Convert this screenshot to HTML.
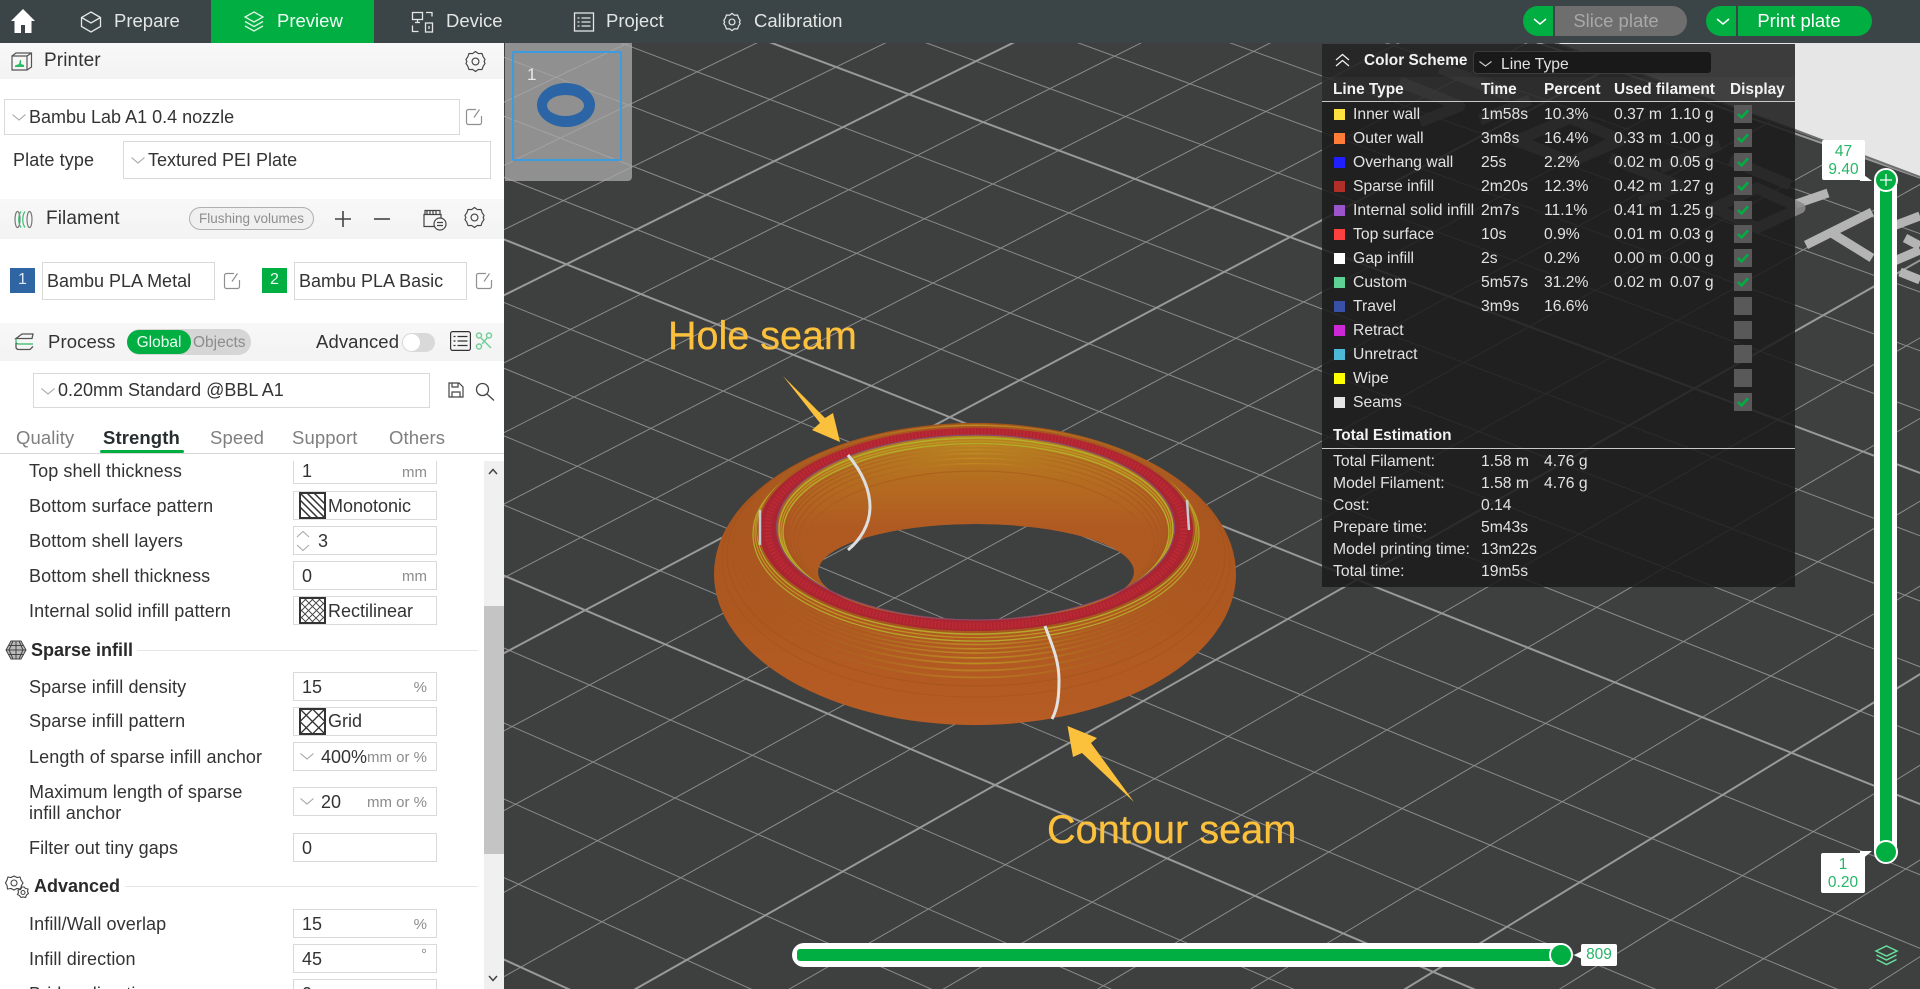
<!DOCTYPE html>
<html><head><meta charset="utf-8"><title>Preview</title>
<style>
html,body{margin:0;padding:0;width:1920px;height:989px;overflow:hidden;background:#3e3f3f;font-family:"Liberation Sans","Noto Sans CJK SC",sans-serif;color:#333}
.a{position:absolute}
.t{position:absolute;white-space:nowrap;line-height:26px;height:26px}
.l{font-size:18px;color:#333;letter-spacing:.1px}
.nav{font-size:18.5px;color:#e4e6e6;top:9px;line-height:24px;height:24px}
.f{position:absolute;box-sizing:border-box;background:#fff;border:1px solid #d9d9d9}
.u{position:absolute;font-size:15px;color:#8c8c8c;line-height:24px;white-space:nowrap;text-align:right;right:1493px}
.v{font-size:18px;color:#333}
.hd{position:absolute;left:0;width:504px;background:linear-gradient(#f8f8f8,#f3f3f3)}
svg.i{position:absolute;overflow:visible;fill:none}
.p{font-size:15.7px;color:#e2e2e2}
.b{font-size:15.4px;font-weight:bold;color:#f2f2f2}
.sq{position:absolute;left:1334px;width:11px;height:11px}
.cb{position:absolute;left:1734px;width:18px;height:18px;background:#595959}
.cb svg{position:absolute;left:3px;top:4px}
.tip{position:absolute;background:#fff;color:#26b566;font-size:15.5px;line-height:18px;text-align:center;border-radius:2px}
</style></head>
<body>
<svg width="0" height="0" style="position:absolute">
<defs>
<symbol id="chev" viewBox="0 0 14 7"><path d="M.5 .5 7 6 13.500 .5" fill="none" stroke="#a6a6a6" stroke-width="1.100"/></symbol>
<symbol id="edit" viewBox="0 0 18 18"><path d="M11 1.500H3.500a2 2 0 0 0-2 2v11a2 2 0 0 0 2 2h11a2 2 0 0 0 2-2V8" fill="none" stroke="#8f8f8f" stroke-width="1.200"/><path d="M9 9.500 14.500 1.500" fill="none" stroke="#8f8f8f" stroke-width="1.200"/></symbol>
<symbol id="gear" viewBox="0 0 22 24"><path d="M11 1.500 14 3.700 17.800 3.500 19 7 21 10 20 12 21 14 19 17 17.800 20.500 14 20.300 11 22.500 8 20.300 4.200 20.500 3 17 1 14 2 12 1 10 3 7 4.200 3.500 8 3.700Z" fill="none" stroke="#444" stroke-width="1.200" stroke-linejoin="round"/><circle cx="11" cy="12" r="3.600" fill="none" stroke="#444" stroke-width="1.200"/></symbol>
<clipPath id="outerC"><ellipse cx="975" cy="574" rx="261" ry="151"/></clipPath>
<clipPath id="innerC"><path clip-rule="evenodd" d="M776.500 527.500a199 92.500 0 1 0 398 0a199 92.500 0 1 0-398 0ZM818 572a158 48 0 1 0 316 0a158 48 0 1 0-316 0Z"/></clipPath>
<linearGradient id="bodyG" x1="0" y1="0" x2="0" y2="1"><stop offset="0" stop-color="#a9551f"/><stop offset=".6" stop-color="#ad5820"/><stop offset="1" stop-color="#b65c24"/></linearGradient>
<linearGradient id="innerG" x1="0" y1="0" x2="0" y2="1"><stop offset="0" stop-color="#b5851f"/><stop offset=".22" stop-color="#b56f20"/><stop offset=".5" stop-color="#b05a22"/><stop offset="1" stop-color="#b05a22"/></linearGradient>
<linearGradient id="ringG" gradientUnits="userSpaceOnUse" x1="714" y1="0" x2="1236" y2="0"><stop offset=".05" stop-color="#a9561f"/><stop offset=".28" stop-color="#ad6420"/><stop offset=".5" stop-color="#bd8c22"/><stop offset=".72" stop-color="#ad6420"/><stop offset=".95" stop-color="#a9561f"/></linearGradient>
<linearGradient id="ringI" gradientUnits="userSpaceOnUse" x1="776" y1="0" x2="1175" y2="0"><stop offset=".05" stop-color="#a9561f"/><stop offset=".3" stop-color="#b26c20"/><stop offset=".5" stop-color="#c08a22"/><stop offset=".7" stop-color="#b26c20"/><stop offset=".95" stop-color="#a9561f"/></linearGradient>
</defs>
</svg>

<!-- plate + grid + logo + torus -->
<svg class="a" style="left:0;top:0" width="1920" height="989" viewBox="0 0 1920 989">
  <rect width="1920" height="989" fill="#3e3f3f"/>
  <path fill="none" stroke="#8b8b8b" stroke-width="1" d="
  M1248 -310L-903 706M1318 -287L-832 741M1389 -263L-760 777M1461 -239L-687 813
  M1607 -191L-538 886M1681 -166L-462 924M1756 -141L-385 962M1831 -116L-306 1001
  M1986 -64L-147 1080M2064 -38L-65 1120M2143 -12L17 1161M2223 15L101 1202
  M2387 69L272 1287M2470 97L360 1330M2554 125L449 1374M2639 153L539 1418
  M2812 211L723 1509M2901 241L817 1556M2990 270L913 1603
  M722 -393L3539 568M661 -366L3483 608M599 -338L3427 648
  M473 -283L3313 731M408 -254L3255 774M343 -226L3195 817M278 -197L3135 860
  M144 -138L3012 950M76 -107L2949 996M7 -77L2885 1042M-63 -46L2820 1089
  M-205 16L2688 1185M-278 48L2620 1235M-351 81L2550 1285M-426 114L2480 1336
  M-577 181L2337 1440M-655 215L2263 1494M-733 249L2188 1548M-812 284L2112 1603
  M-974 356L1955 1717M-1057 392L1875 1775"/>
  <path fill="none" stroke="#999" stroke-width="2" d="
  M1533 -215L-613 849M1908 -90L-227 1040M2305 42L186 1244M2725 182L630 1463
  M536 -311L3371 690M211 -167L3074 905M-134 -15L2755 1137M-501 147L2409 1388M-893 320L2034 1660"/>

  <polygon points="1555,43 1920,43 1920,177 1795,130" fill="#e6e6e6"/>
  <path d="M1555 43 1795 130 1920 177" stroke="#6f6f6f" stroke-width="2" fill="none"/>
  <g fill="none" stroke="#b4b4b4" stroke-width="9" stroke-linejoin="round">
    <path d="M1796 204 1828 193"/>
    <path d="M1806 245 1872 212M1830 232 1872 258"/>
    <path d="M1888 228 1920 216M1892 262 1920 250M1905 238 1920 246M1900 272 1920 280"/>
  </g>
  <g fill="none" stroke="#8a8a8a" stroke-width="11" stroke-linejoin="round" opacity=".9">
    <path d="M1570 118 1622 140 1570 162 1518 140Z"/>
    <path d="M1757 188 1800 208 1757 228 1714 208Z"/>
    <path d="M1400 82 1460 106 1420 122M1440 68 1510 96M1610 158 1680 186 1640 202M1660 168 1720 145M1730 160 1790 185M1480 120 1530 100"/>
  </g>

  <path fill-rule="evenodd" fill="url(#bodyG)" d="M714 574a261 151 0 1 0 522 0a261 151 0 1 0-522 0ZM818 572a158 48 0 1 0 316 0a158 48 0 1 0-316 0Z"/>
  <g clip-path="url(#outerC)" fill="none">
    <ellipse cx="976" cy="530.500" rx="219" ry="103.600" stroke="#b3a82c" stroke-width="1.500"/>
    <ellipse cx="976" cy="532.200" rx="221" ry="105.400" stroke="#bd9422" stroke-width="1.300"/>
    <ellipse cx="976" cy="533.900" rx="223" ry="107.200" stroke="#b3a82c" stroke-width="1.300"/>
    <ellipse cx="976" cy="535.500" rx="225" ry="109" stroke="url(#ringG)" stroke-width="1.500"/>
    <ellipse cx="976" cy="537.500" rx="228" ry="111.300" stroke="url(#ringG)" stroke-width="1.600"/>
    <ellipse cx="976" cy="539.500" rx="230" ry="113.500" stroke="url(#ringG)" stroke-width="1.500"/>
    <ellipse cx="976" cy="541.900" rx="233" ry="116" stroke="url(#ringG)" stroke-width="1.700"/>
    <ellipse cx="976" cy="544.600" rx="236" ry="118.900" stroke="url(#ringG)" stroke-width="1.800"/>
    <ellipse cx="976" cy="547.900" rx="240" ry="122.600" stroke="url(#ringG)" stroke-width="1.800" opacity=".8"/>
    <ellipse cx="976" cy="551.300" rx="244" ry="126.200" stroke="url(#ringG)" stroke-width="1.800" opacity=".6"/>
    <ellipse cx="976" cy="555" rx="249" ry="131" stroke="#9a5018" stroke-width="1" opacity=".5"/>
    <ellipse cx="976" cy="560" rx="254" ry="137" stroke="#9a5018" stroke-width="1" opacity=".4"/>
  </g>
  <path fill-rule="evenodd" fill="#a92531" d="M758 529.500a218 102.500 0 1 0 436 0a218 102.500 0 1 0-436 0ZM776.500 527.500a199 92.500 0 1 0 398 0a199 92.500 0 1 0-398 0Z"/>
  <ellipse cx="976" cy="529.500" rx="218" ry="102.500" fill="none" stroke="#a8561f" stroke-width="2"/>
  <ellipse cx="975.500" cy="528.500" rx="208" ry="97.500" fill="none" stroke="#c42a34" stroke-width="7" stroke-dasharray="2 1.500" opacity=".7"/>
  <path fill-rule="evenodd" fill="url(#innerG)" d="M776.500 527.500a199 92.500 0 1 0 398 0a199 92.500 0 1 0-398 0ZM818 572a158 48 0 1 0 316 0a158 48 0 1 0-316 0Z"/>
  <g clip-path="url(#innerC)" fill="none">
    <ellipse cx="976" cy="529" rx="197" ry="91" stroke="#b3b02a" stroke-width="1.500"/>
    <ellipse cx="976" cy="530.500" rx="195" ry="89.500" stroke="#bd9622" stroke-width="1.300"/>
    <ellipse cx="976" cy="531.800" rx="193" ry="88.300" stroke="#b3ae2a" stroke-width="1.300"/>
    <ellipse cx="976" cy="533" rx="191" ry="87" stroke="url(#ringI)" stroke-width="1.400"/>
    <ellipse cx="976" cy="534.800" rx="189" ry="85.300" stroke="url(#ringI)" stroke-width="1.400"/>
    <ellipse cx="976" cy="536.800" rx="186" ry="83.300" stroke="url(#ringI)" stroke-width="1.500"/>
    <ellipse cx="976" cy="539" rx="182" ry="80.800" stroke="url(#ringI)" stroke-width="1.500"/>
    <ellipse cx="976" cy="541.800" rx="178" ry="78.300" stroke="url(#ringI)" stroke-width="1.500" opacity=".8"/>
    <ellipse cx="976" cy="545.500" rx="172" ry="74.500" stroke="#a85c1c" stroke-width="1.300" opacity=".7"/>
  </g>
  <ellipse cx="975.500" cy="527.500" rx="199" ry="92.500" fill="none" stroke="#8b4a66" stroke-width="1.300"/>
  <path d="M848 455C862 472 870 490 870 507C870 525 860 540 848 550" fill="none" stroke="#dedede" stroke-width="3"/>
  <path d="M1045 626C1052 645 1059 660 1059 680C1059 695 1058 708 1052 719" fill="none" stroke="#e2e2e2" stroke-width="3"/>
  <path d="M760 510 760 545M1187 500 1189 530" stroke="#c8c8d0" stroke-width="2.500" fill="none"/>

  <polygon points="783,376 825,418 833,413 840,442 812,430 820,423" fill="#fcc13c"/>
  <polygon points="1067.500,726 1097,738 1091,743 1134,802 1082,753 1073,757" fill="#fcc13c"/>
  <text x="668" y="349" font-family="Liberation Sans, sans-serif" font-size="39.500" fill="#fcc13c" stroke="#fcc13c" stroke-width=".3">Hole seam</text>
  <text x="1047" y="843" font-family="Liberation Sans, sans-serif" font-size="39.700" fill="#fcc13c" stroke="#fcc13c" stroke-width=".3">Contour seam</text>
</svg>

<!-- thumbnail -->
<div class="a" style="left:505px;top:43px;width:127px;height:138px;background:rgba(170,170,170,.76);border-radius:0 0 4px 0"></div>
<div class="a" style="left:512px;top:51px;width:110px;height:110px;box-sizing:border-box;border:2px solid #3d9be0;border-radius:2px"></div>
<span class="t" style="left:527px;top:62px;font-size:17px;color:#e8e8e8">1</span>
<svg class="a" style="left:505px;top:43px" width="127" height="138"><path fill-rule="evenodd" fill="#2b65a6" d="M32 62a29 22 0 1 0 58 0a29 22 0 1 0-58 0ZM42 62.500a18.500 10.500 0 1 0 37 0a18.500 10.500 0 1 0-37 0Z"/></svg>

<!-- top bar -->
<div class="a" style="left:0;top:0;width:1920px;height:43px;background:#3b4446"></div>
<div class="a" style="left:211px;top:0;width:163px;height:43px;background:#00ae42"></div>
<svg class="i" style="left:10px;top:8px" width="26" height="26" viewBox="0 0 26 26"><path d="M13 1 1 13h3.500v12h6.500v-8h4v8h6.500V13H25z" fill="#fff"/></svg>
<svg class="i" style="left:80px;top:10px" width="22" height="24" viewBox="0 0 22 24" stroke="#e4e6e6" stroke-width="1.300"><path d="M11 2 20.500 7.500v9L11 22 1.500 16.500v-9Z"/><path d="M1.500 7.500 11 13l9.500-5.500"/></svg>
<span class="t nav" style="left:114px">Prepare</span>
<svg class="i" style="left:243px;top:10px" width="22" height="24" viewBox="0 0 22 24" stroke="#dff5e6" stroke-width="1.300"><path d="M11 2 20 7 11 12 2 7Z"/><path d="M2 11.500 11 16.500 20 11.500M2 16 11 21 20 16"/></svg>
<span class="t nav" style="left:277px;color:#f0fff5">Preview</span>
<svg class="i" style="left:411px;top:10px" width="24" height="24" viewBox="0 0 24 24" stroke="#e4e6e6" stroke-width="1.300"><rect x="1.500" y="2.500" width="10" height="7"/><path d="M4 12.500h5M6.500 9.500v3M15 2.500h6v4M1.500 15.500v6h6"/><rect x="14.500" y="13" width="7" height="9"/><path d="M18 16v3"/></svg>
<span class="t nav" style="left:446px">Device</span>
<svg class="i" style="left:573px;top:11px" width="22" height="22" viewBox="0 0 22 22" stroke="#e4e6e6" stroke-width="1.300"><rect x="1.500" y="2" width="19" height="18"/><path d="M4.500 7h2M8.500 7h9M4.500 11h2M8.500 11h9M4.500 15h2M8.500 15h9"/></svg>
<span class="t nav" style="left:606px">Project</span>
<svg class="i" style="left:723px;top:12px" width="18" height="20" viewBox="0 0 22 24"><path d="M11 1.500 14 3.700 17.800 3.500 19 7 21 10 20 12 21 14 19 17 17.800 20.500 14 20.300 11 22.500 8 20.300 4.200 20.500 3 17 1 14 2 12 1 10 3 7 4.200 3.500 8 3.700Z" stroke="#e4e6e6" stroke-width="1.500"/><circle cx="11" cy="12" r="3.600" stroke="#e4e6e6" stroke-width="1.500"/></svg>
<span class="t nav" style="left:754px">Calibration</span>

<div class="a" style="left:1523px;top:6px;width:30px;height:30px;background:#00ae42;border-radius:15px 0 0 15px"></div>
<svg class="i" style="left:1533px;top:18px" width="14" height="7"><path d="M1 1 7 6 13 1" stroke="#fff" stroke-width="1.500"/></svg>
<div class="a" style="left:1555px;top:6px;width:132px;height:30px;background:#6e6e6e;border-radius:0 15px 15px 0"></div>
<span class="t" style="left:1550px;width:132px;top:8px;text-align:center;font-size:18.500px;color:#a8a8a8">Slice plate</span>
<div class="a" style="left:1706px;top:6px;width:30px;height:30px;background:#00ae42;border-radius:15px 0 0 15px"></div>
<svg class="i" style="left:1716px;top:18px" width="14" height="7"><path d="M1 1 7 6 13 1" stroke="#fff" stroke-width="1.500"/></svg>
<div class="a" style="left:1738px;top:6px;width:134px;height:30px;background:#00ae42;border-radius:0 15px 15px 0"></div>
<span class="t" style="left:1734px;width:130px;top:8px;text-align:center;font-size:18.500px;color:#fff">Print plate</span>

<!-- left panel -->
<div class="a" style="left:0;top:43px;width:504px;height:946px;background:#fff;overflow:hidden"></div>
<div class="hd" style="top:43px;height:36px"></div>
<svg class="i" style="left:11px;top:52px" width="22" height="19" viewBox="0 0 22 19"><path d="M1 4h15v14H1zM1 4l4-3h15.500v14l-4.500 3M16 4l4.500-3" stroke="#555" stroke-width="1.200"/><path d="M4 15h9v-2l-3-1v-4h-1l-1 4-4 1.500z" fill="#2dbb66"/></svg>
<span class="t l" style="left:44px;top:48px;font-size:19px">Printer</span>
<svg class="i" style="left:465px;top:50px" width="21" height="23"><use href="#gear"/></svg>

<div class="f" style="left:4px;top:99px;width:456px;height:36px"></div>
<svg class="i" style="left:12px;top:114px" width="14" height="7"><use href="#chev"/></svg>
<span class="t v" style="left:29px;top:104px">Bambu Lab A1 0.4 nozzle</span>
<svg class="i" style="left:465px;top:108px" width="18" height="18"><use href="#edit"/></svg>
<span class="t l" style="left:13px;top:147px">Plate type</span>
<div class="f" style="left:123px;top:141px;width:368px;height:38px"></div>
<svg class="i" style="left:131px;top:157px" width="14" height="7"><use href="#chev"/></svg>
<span class="t v" style="left:148px;top:147px">Textured PEI Plate</span>

<div class="hd" style="top:199px;height:40px"></div>
<svg class="i" style="left:14px;top:210px" width="20" height="19" viewBox="0 0 20 19" stroke-width="1.200"><ellipse cx="3.500" cy="9.500" rx="2.500" ry="8" stroke="#777"/><path d="M7 1.500c-3 4-3 12 0 16M11 1.500c-3 4-3 12 0 16" stroke="#33c072"/><ellipse cx="15.500" cy="9.500" rx="2.500" ry="8" stroke="#777"/></svg>
<span class="t l" style="left:46px;top:206px;font-size:19px">Filament</span>
<div class="a" style="left:189px;top:207px;width:125px;height:23px;box-sizing:border-box;border:1px solid #b0b0b0;border-radius:12px;background:#f0f0f0"></div>
<span class="t" style="left:199px;top:206px;font-size:13.500px;color:#8e8e8e">Flushing volumes</span>
<svg class="i" style="left:335px;top:211px" width="16" height="16"><path d="M8 0v16M0 8h16" stroke="#444" stroke-width="1.600"/></svg>
<svg class="i" style="left:374px;top:211px" width="16" height="16"><path d="M0 8h16" stroke="#444" stroke-width="1.600"/></svg>
<svg class="i" style="left:423px;top:209px" width="24" height="22" viewBox="0 0 24 22" stroke="#444" stroke-width="1.200"><path d="M2 1.500h15v4H2zM1 5.500h17v12H1z"/><path d="M4 2v3M7 2v3M10 2v3M13 2v3"/><circle cx="17" cy="15" r="6" fill="#f5f5f5"/><path d="M14 13.500h6M14 16.500h6"/></svg>
<svg class="i" style="left:464px;top:206px" width="21" height="23"><use href="#gear"/></svg>

<div class="a" style="left:10px;top:268px;width:25px;height:25px;background:#2f65a3"></div>
<span class="t" style="left:10px;width:25px;top:267px;text-align:center;font-size:16px;color:#dfe9f5">1</span>
<div class="f" style="left:42px;top:262px;width:173px;height:38px"></div>
<span class="t v" style="left:47px;top:268px">Bambu PLA Metal</span>
<svg class="i" style="left:223px;top:272px" width="18" height="18"><use href="#edit"/></svg>
<div class="a" style="left:262px;top:268px;width:25px;height:25px;background:#00ae42"></div>
<span class="t" style="left:262px;width:25px;top:267px;text-align:center;font-size:16px;color:#e8fff0">2</span>
<div class="f" style="left:294px;top:262px;width:173px;height:38px"></div>
<span class="t v" style="left:299px;top:268px">Bambu PLA Basic</span>
<svg class="i" style="left:475px;top:272px" width="18" height="18"><use href="#edit"/></svg>

<div class="hd" style="top:323px;height:38px"></div>
<svg class="i" style="left:14px;top:332px" width="21" height="20" viewBox="0 0 21 20" stroke-width="1.300"><path d="M2 6.500 8 2h11l-1 4.500H7z" stroke="#555"/><path d="M2 7v3c0 1.500 1 2 3 2h14" stroke="#2dbb66"/><path d="M2 11v4c0 1.500 1 2.500 3 2.500h11l3-3" stroke="#555"/></svg>
<span class="t l" style="left:48px;top:329px;font-size:18.500px">Process</span>
<div class="a" style="left:127px;top:329px;width:124px;height:26px;background:#d6d6d6;border-radius:13px"></div>
<div class="a" style="left:127px;top:330px;width:64px;height:24px;background:#00ae42;border-radius:12px"></div>
<span class="t" style="left:127px;width:64px;top:330px;text-align:center;font-size:15.500px;color:#eafff1">Global</span>
<span class="t" style="left:193px;top:330px;font-size:15.500px;color:#8c8c8c">Objects</span>
<span class="t l" style="left:316px;top:329px;font-size:18.500px">Advanced</span>
<div class="a" style="left:402px;top:333px;width:33px;height:19px;background:#d9d9d9;border-radius:10px"></div>
<div class="a" style="left:403px;top:334px;width:17px;height:17px;background:#fff;border-radius:50%"></div>
<svg class="i" style="left:450px;top:331px" width="21" height="20" viewBox="0 0 21 20" stroke="#333" stroke-width="1.200"><rect x=".6" y=".6" width="19.800" height="18.800" rx="2"/><path d="M3.500 5.500h2M7.500 5.500h10M3.500 10h2M7.500 10h10M3.500 14.500h2M7.500 14.500h10"/></svg>
<svg class="i" style="left:475px;top:332px" width="18" height="18" viewBox="0 0 18 18" stroke="#73cf9a" stroke-width="1.500"><circle cx="4" cy="3.500" r="2.500"/><circle cx="14" cy="3.500" r="2.500"/><circle cx="4" cy="14.500" r="2.500"/><path d="M6 6 16 16M12 6 7 12"/></svg>

<div class="f" style="left:33px;top:373px;width:397px;height:35px"></div>
<svg class="i" style="left:41px;top:388px" width="14" height="7"><use href="#chev"/></svg>
<span class="t v" style="left:58px;top:377px">0.20mm Standard @BBL A1</span>
<svg class="i" style="left:448px;top:382px" width="16" height="16" viewBox="0 0 16 16" stroke="#444" stroke-width="1.200"><path d="M1 1h10l4 4v10H1z"/><path d="M4 1v4h6V1M4 15v-5h8v5"/></svg>
<svg class="i" style="left:475px;top:382px" width="20" height="19" viewBox="0 0 20 19" stroke="#444" stroke-width="1.300"><circle cx="7.500" cy="7.500" r="6"/><path d="M12 12l7 6.500"/></svg>

<span class="t l" style="left:16px;top:425px;color:#7f7f7f;font-size:18.500px">Quality</span>
<span class="t l" style="left:103px;top:425px;font-weight:bold;font-size:18.500px;color:#262e30">Strength</span>
<span class="t l" style="left:210px;top:425px;color:#7f7f7f;font-size:18.500px">Speed</span>
<span class="t l" style="left:292px;top:425px;color:#7f7f7f;font-size:18.500px">Support</span>
<span class="t l" style="left:389px;top:425px;color:#7f7f7f;font-size:18.500px">Others</span>
<div class="a" style="left:0;top:453px;width:504px;height:1px;background:#d8d8d8"></div>
<div class="a" style="left:100px;top:450px;width:84px;height:3px;background:#00ae42;border-radius:2px"></div>

<div class="a" style="left:484px;top:461px;width:20px;height:528px;background:#f0f0f0"></div>
<div class="a" style="left:484px;top:606px;width:20px;height:248px;background:#c4c4c4"></div>
<svg class="i" style="left:488px;top:468px" width="10" height="7"><path d="M1 6 5 1.500 9 6" stroke="#444" stroke-width="1.500"/></svg>
<svg class="i" style="left:488px;top:975px" width="10" height="7"><path d="M1 1 5 5.500 9 1" stroke="#444" stroke-width="1.500"/></svg>

<!-- settings -->
<span class="t l" style="left:29px;top:458px">Top shell thickness</span>
<div class="f" style="left:293px;top:461px;width:144px;height:23px;border-top:0"></div>
<span class="t v" style="left:302px;top:458px">1</span><span class="u" style="top:461px">mm</span>

<span class="t l" style="left:29px;top:493px">Bottom surface pattern</span>
<div class="f" style="left:293px;top:491px;width:144px;height:29px"></div>
<svg class="i" style="left:299px;top:492px" width="27" height="27" viewBox="0 0 27 27"><path d="M1 8 19 26M1 1 26 26M8 1 26 19M15 1 26 12M1 15 12 26" stroke="#333" stroke-width="1.500"/><rect x="1" y="1" width="25" height="25" stroke="#333" stroke-width="2"/></svg>
<span class="t v" style="left:328px;top:493px">Monotonic</span>

<span class="t l" style="left:29px;top:528px">Bottom shell layers</span>
<div class="f" style="left:293px;top:526px;width:144px;height:29px"></div>
<svg class="i" style="left:296px;top:530px" width="14" height="22"><path d="M1 7 7 1.500 13 7M1 15 7 20.500 13 15" stroke="#aaa" stroke-width="1.100"/></svg>
<span class="t v" style="left:318px;top:528px">3</span>

<span class="t l" style="left:29px;top:563px">Bottom shell thickness</span>
<div class="f" style="left:293px;top:561px;width:144px;height:29px"></div>
<span class="t v" style="left:302px;top:563px">0</span><span class="u" style="top:565px">mm</span>

<span class="t l" style="left:29px;top:598px">Internal solid infill pattern</span>
<div class="f" style="left:293px;top:596px;width:144px;height:29px"></div>
<svg class="i" style="left:299px;top:597px" width="27" height="27" viewBox="0 0 27 27" stroke="#444" stroke-width=".9"><path d="M1 8 8 1M1 15 15 1M1 22 22 1M5 26 26 5M12 26 26 12M19 26 26 19M1 19 8 26M1 12 15 26M1 5 22 26M5 1 26 22M12 1 26 15M19 1 26 8"/><rect x="1" y="1" width="25" height="25" stroke="#333" stroke-width="2"/></svg>
<span class="t v" style="left:328px;top:598px">Rectilinear</span>

<svg class="i" style="left:6px;top:640px" width="20" height="20" viewBox="0 0 20 20" stroke="#444" stroke-width="1"><path d="M5 1h10l5 9-5 9H5L0 10Z" fill="#bbb"/><path d="M0 10h20M2.500 5.500h15M2.500 14.500h15M7 1 3 10l4 9M13 1l4 9-4 9M10 1v18"/></svg>
<span class="t" style="left:31px;top:637px;font-size:18px;font-weight:bold;color:#2a2a2a">Sparse infill</span>
<div class="a" style="left:137px;top:650px;width:341px;height:1px;background:#e6e6e6"></div>

<span class="t l" style="left:29px;top:674px">Sparse infill density</span>
<div class="f" style="left:293px;top:672px;width:144px;height:29px"></div>
<span class="t v" style="left:302px;top:674px">15</span><span class="u" style="top:676px">%</span>

<span class="t l" style="left:29px;top:708px">Sparse infill pattern</span>
<div class="f" style="left:293px;top:707px;width:144px;height:29px"></div>
<svg class="i" style="left:299px;top:708px" width="27" height="27" viewBox="0 0 27 27" stroke="#333" stroke-width="1.300"><path d="M1 1 26 26M26 1 1 26M13.500 1 26 13.500 13.500 26 1 13.500Z"/><rect x="1" y="1" width="25" height="25" stroke-width="2"/></svg>
<span class="t v" style="left:328px;top:708px">Grid</span>

<span class="t l" style="left:29px;top:744px">Length of sparse infill anchor</span>
<div class="f" style="left:293px;top:742px;width:144px;height:29px"></div>
<svg class="i" style="left:300px;top:753px" width="14" height="7"><use href="#chev"/></svg>
<span class="t v" style="left:321px;top:744px">400%</span><span class="u" style="top:746px">mm or %</span>

<span class="t l" style="left:29px;top:779px">Maximum length of sparse</span>
<span class="t l" style="left:29px;top:800px">infill anchor</span>
<div class="f" style="left:293px;top:787px;width:144px;height:29px"></div>
<svg class="i" style="left:300px;top:798px" width="14" height="7"><use href="#chev"/></svg>
<span class="t v" style="left:321px;top:789px">20</span><span class="u" style="top:791px">mm or %</span>

<span class="t l" style="left:29px;top:835px">Filter out tiny gaps</span>
<div class="f" style="left:293px;top:833px;width:144px;height:29px"></div>
<span class="t v" style="left:302px;top:835px">0</span>

<svg class="i" style="left:5px;top:875px" width="24" height="23" viewBox="0 0 24 23" stroke="#444" stroke-width="1.100"><path d="M9 1 12 2.500 15 2 16 5 18 8 16.500 10.500 15.500 14 12 13.500 9 15 6 13.500 2.500 14 2 10.500 0.500 8 2 5 3 2 6 2.500Z"/><circle cx="9" cy="8" r="3"/><path d="M19 12l1.500 1.500 2.500.5-.5 2.500 1 2-2 1.500-1 2.500-2.500-.5-2 .5-1.500-2-2-1 1-2-.5-2.500 2.500-.5L17 12Z" fill="#fff"/><circle cx="18" cy="17.500" r="2"/></svg>
<span class="t" style="left:34px;top:873px;font-size:18px;font-weight:bold;color:#2a2a2a">Advanced</span>
<div class="a" style="left:125px;top:886px;width:353px;height:1px;background:#e6e6e6"></div>

<span class="t l" style="left:29px;top:911px">Infill/Wall overlap</span>
<div class="f" style="left:293px;top:909px;width:144px;height:29px"></div>
<span class="t v" style="left:302px;top:911px">15</span><span class="u" style="top:913px">%</span>

<span class="t l" style="left:29px;top:946px">Infill direction</span>
<div class="f" style="left:293px;top:944px;width:144px;height:29px"></div>
<span class="t v" style="left:302px;top:946px">45</span><span class="u" style="top:943px">°</span>

<span class="t l" style="left:29px;top:981px;height:8px;overflow:hidden">Bridge direction</span>
<div class="f" style="left:293px;top:979px;width:144px;height:10px;border-bottom:0"></div>
<span class="t v" style="left:302px;top:981px;height:8px;overflow:hidden">0</span>

<!-- legend panel -->
<div class="a" style="left:1322px;top:44px;width:473px;height:543px;background:rgba(28,28,28,.88)"></div>
<div class="a" style="left:1322px;top:44px;width:473px;height:33px;background:rgba(255,255,255,.035)"></div>
<div class="a" style="left:1322px;top:77px;width:473px;height:24px;background:rgba(255,255,255,.06)"></div>
<div class="a" style="left:1322px;top:101px;width:473px;height:1px;background:#c8c8c8"></div>
<svg class="i" style="left:1335px;top:53px" width="15" height="14"><path d="M1 7 7.500 1.500 14 7M1 13 7.500 7.500 14 13" stroke="#eee" stroke-width="1.300"/></svg>
<span class="t b" style="left:1364px;top:48px">Color Scheme</span>
<div class="a" style="left:1473px;top:51px;width:239px;height:23px;box-sizing:border-box;background:#191919;border:1px solid #3c3c3c;border-radius:4px"></div>
<svg class="i" style="left:1479px;top:61px" width="13" height="6"><path d="M.5 .5 6.500 5 12.500 .5" stroke="#ccc" stroke-width="1.100"/></svg>
<span class="t p" style="left:1501px;top:52px">Line Type</span>

<span class="t b" style="left:1333px;top:77px">Line Type</span>
<span class="t b" style="left:1481px;top:77px">Time</span>
<span class="t b" style="left:1544px;top:77px">Percent</span>
<span class="t b" style="left:1614px;top:77px">Used filament</span>
<span class="t b" style="left:1730px;top:77px">Display</span>

<div class="sq" style="top:109px;background:#ffe23f"></div><span class="t p" style="left:1353px;top:102px">Inner wall</span><span class="t p" style="left:1481px;top:102px">1m58s</span><span class="t p" style="left:1544px;top:102px">10.3%</span><span class="t p" style="left:1614px;top:102px">0.37 m</span><span class="t p" style="left:1670px;top:102px">1.10 g</span>
<div class="sq" style="top:133px;background:#ff7d38"></div><span class="t p" style="left:1353px;top:126px">Outer wall</span><span class="t p" style="left:1481px;top:126px">3m8s</span><span class="t p" style="left:1544px;top:126px">16.4%</span><span class="t p" style="left:1614px;top:126px">0.33 m</span><span class="t p" style="left:1670px;top:126px">1.00 g</span>
<div class="sq" style="top:157px;background:#1f1fff"></div><span class="t p" style="left:1353px;top:150px">Overhang wall</span><span class="t p" style="left:1481px;top:150px">25s</span><span class="t p" style="left:1544px;top:150px">2.2%</span><span class="t p" style="left:1614px;top:150px">0.02 m</span><span class="t p" style="left:1670px;top:150px">0.05 g</span>
<div class="sq" style="top:181px;background:#b03029"></div><span class="t p" style="left:1353px;top:174px">Sparse infill</span><span class="t p" style="left:1481px;top:174px">2m20s</span><span class="t p" style="left:1544px;top:174px">12.3%</span><span class="t p" style="left:1614px;top:174px">0.42 m</span><span class="t p" style="left:1670px;top:174px">1.27 g</span>
<div class="sq" style="top:205px;background:#9a54cc"></div><span class="t p" style="left:1353px;top:198px;font-size:15.800px">Internal solid infill</span><span class="t p" style="left:1481px;top:198px">2m7s</span><span class="t p" style="left:1544px;top:198px">11.1%</span><span class="t p" style="left:1614px;top:198px">0.41 m</span><span class="t p" style="left:1670px;top:198px">1.25 g</span>
<div class="sq" style="top:229px;background:#ff4040"></div><span class="t p" style="left:1353px;top:222px">Top surface</span><span class="t p" style="left:1481px;top:222px">10s</span><span class="t p" style="left:1544px;top:222px">0.9%</span><span class="t p" style="left:1614px;top:222px">0.01 m</span><span class="t p" style="left:1670px;top:222px">0.03 g</span>
<div class="sq" style="top:253px;background:#ffffff"></div><span class="t p" style="left:1353px;top:246px">Gap infill</span><span class="t p" style="left:1481px;top:246px">2s</span><span class="t p" style="left:1544px;top:246px">0.2%</span><span class="t p" style="left:1614px;top:246px">0.00 m</span><span class="t p" style="left:1670px;top:246px">0.00 g</span>
<div class="sq" style="top:277px;background:#5ed194"></div><span class="t p" style="left:1353px;top:270px">Custom</span><span class="t p" style="left:1481px;top:270px">5m57s</span><span class="t p" style="left:1544px;top:270px">31.2%</span><span class="t p" style="left:1614px;top:270px">0.02 m</span><span class="t p" style="left:1670px;top:270px">0.07 g</span>
<div class="sq" style="top:301px;background:#3850a8"></div><span class="t p" style="left:1353px;top:294px">Travel</span><span class="t p" style="left:1481px;top:294px">3m9s</span><span class="t p" style="left:1544px;top:294px">16.6%</span>
<div class="sq" style="top:325px;background:#cd28d6"></div><span class="t p" style="left:1353px;top:318px">Retract</span>
<div class="sq" style="top:349px;background:#4db8d8"></div><span class="t p" style="left:1353px;top:342px">Unretract</span>
<div class="sq" style="top:373px;background:#ffff00"></div><span class="t p" style="left:1353px;top:366px">Wipe</span>
<div class="sq" style="top:397px;background:#e6e6e6"></div><span class="t p" style="left:1353px;top:390px">Seams</span>

<div class="cb" style="top:105px"><svg width="12" height="10"><path d="M1 5 4.500 8.500 11 1.500" fill="none" stroke="#00ae42" stroke-width="2.400"/></svg></div>
<div class="cb" style="top:129px"><svg width="12" height="10"><path d="M1 5 4.500 8.500 11 1.500" fill="none" stroke="#00ae42" stroke-width="2.400"/></svg></div>
<div class="cb" style="top:153px"><svg width="12" height="10"><path d="M1 5 4.500 8.500 11 1.500" fill="none" stroke="#00ae42" stroke-width="2.400"/></svg></div>
<div class="cb" style="top:177px"><svg width="12" height="10"><path d="M1 5 4.500 8.500 11 1.500" fill="none" stroke="#00ae42" stroke-width="2.400"/></svg></div>
<div class="cb" style="top:201px"><svg width="12" height="10"><path d="M1 5 4.500 8.500 11 1.500" fill="none" stroke="#00ae42" stroke-width="2.400"/></svg></div>
<div class="cb" style="top:225px"><svg width="12" height="10"><path d="M1 5 4.500 8.500 11 1.500" fill="none" stroke="#00ae42" stroke-width="2.400"/></svg></div>
<div class="cb" style="top:249px"><svg width="12" height="10"><path d="M1 5 4.500 8.500 11 1.500" fill="none" stroke="#00ae42" stroke-width="2.400"/></svg></div>
<div class="cb" style="top:273px"><svg width="12" height="10"><path d="M1 5 4.500 8.500 11 1.500" fill="none" stroke="#00ae42" stroke-width="2.400"/></svg></div>
<div class="cb" style="top:297px"></div>
<div class="cb" style="top:321px"></div>
<div class="cb" style="top:345px"></div>
<div class="cb" style="top:369px"></div>
<div class="cb" style="top:393px"><svg width="12" height="10"><path d="M1 5 4.500 8.500 11 1.500" fill="none" stroke="#00ae42" stroke-width="2.400"/></svg></div>

<span class="t b" style="left:1333px;top:423px">Total Estimation</span>
<div class="a" style="left:1322px;top:448px;width:473px;height:1px;background:#c8c8c8"></div>
<span class="t p" style="left:1333px;top:449px">Total Filament:</span><span class="t p" style="left:1481px;top:449px">1.58 m</span><span class="t p" style="left:1544px;top:449px">4.76 g</span>
<span class="t p" style="left:1333px;top:471px">Model Filament:</span><span class="t p" style="left:1481px;top:471px">1.58 m</span><span class="t p" style="left:1544px;top:471px">4.76 g</span>
<span class="t p" style="left:1333px;top:493px">Cost:</span><span class="t p" style="left:1481px;top:493px">0.14</span>
<span class="t p" style="left:1333px;top:515px">Prepare time:</span><span class="t p" style="left:1481px;top:515px">5m43s</span>
<span class="t p" style="left:1333px;top:537px">Model printing time:</span><span class="t p" style="left:1481px;top:537px">13m22s</span>
<span class="t p" style="left:1333px;top:559px">Total time:</span><span class="t p" style="left:1481px;top:559px">19m5s</span>

<!-- vertical slider -->
<div class="a" style="left:1874px;top:180px;width:23px;height:672px;background:#fff"></div>
<div class="a" style="left:1880px;top:180px;width:12px;height:672px;background:#00ae42"></div>
<div class="a" style="left:1874px;top:168px;width:24px;height:24px;box-sizing:border-box;border:2px solid #fff;border-radius:50%;background:#00ae42"></div>
<svg class="i" style="left:1880px;top:174px" width="12" height="12"><path d="M6 0v12M0 6h12" stroke="#fff" stroke-width="1.200"/></svg>
<div class="a" style="left:1874px;top:840px;width:24px;height:24px;box-sizing:border-box;border:2px solid #fff;border-radius:50%;background:#00ae42"></div>
<svg class="a" style="left:1860px;top:172px" width="14" height="10"><path d="M0 0 12 9H0Z" fill="#fff"/></svg>
<div class="tip" style="left:1822px;top:140px;width:43px;height:40px;padding-top:3px;box-sizing:border-box">47<br>9.40</div>
<svg class="a" style="left:1860px;top:851px" width="14" height="10"><path d="M0 10 12 0H0Z" fill="#fff"/></svg>
<div class="tip" style="left:1821px;top:853px;width:44px;height:40px;padding-top:3px;box-sizing:border-box">1<br>0.20</div>

<!-- horizontal slider -->
<div class="a" style="left:792px;top:943px;width:780px;height:24px;background:#fff;border-radius:12px"></div>
<div class="a" style="left:797px;top:949px;width:765px;height:12px;background:#00ae42;border-radius:3px"></div>
<div class="a" style="left:1549px;top:943px;width:24px;height:24px;box-sizing:border-box;border:2px solid #fff;border-radius:50%;background:#00ae42"></div>
<svg class="a" style="left:1574px;top:951px" width="8" height="8"><path d="M8 0 0 4 8 8Z" fill="#fff"/></svg>
<div class="tip" style="left:1581px;top:944px;width:36px;height:22px;line-height:22px">809</div>

<svg class="i" style="left:1875px;top:945px" width="23" height="21" viewBox="0 0 23 21" stroke="#66e09a" stroke-width="1.500"><path d="M11.500 1 22 6 11.500 11 1 6Z"/><path d="M1.500 10 11.500 15 21.500 10M1.500 14.500 11.500 19.500 21.500 14.500"/></svg>
</body></html>
